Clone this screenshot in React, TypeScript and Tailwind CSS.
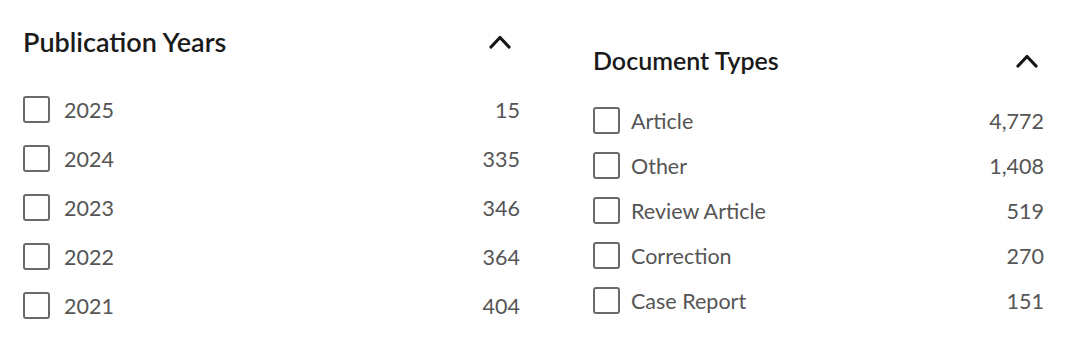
type Item = { label: string; count: string };

const years: Item[] = [
  { label: "2025", count: "15" },
  { label: "2024", count: "335" },
  { label: "2023", count: "346" },
  { label: "2022", count: "364" },
  { label: "2021", count: "404" },
];

const types: Item[] = [
  { label: "Article", count: "4,772" },
  { label: "Other", count: "1,408" },
  { label: "Review Article", count: "519" },
  { label: "Correction", count: "270" },
  { label: "Case Report", count: "151" },
];

function Chevron() {
  return (
    <svg width="22" height="16" viewBox="0 0 22 16" fill="none">
      <polyline
        points="2,13 11,3.5 20,13"
        stroke="#151515"
        strokeWidth="3.2"
        strokeLinecap="round"
        strokeLinejoin="round"
      />
    </svg>
  );
}

function Checkbox() {
  return <span className="block w-[27px] h-[27px] shrink-0 rounded-[3px] border-[2.7px] border-[#6a6a6a] bg-white" />;
}

export default function App() {
  const font = { fontFamily: 'Lato, "Open Sans", sans-serif' };
  return (
    <div className="w-[1080px] h-[350px] bg-white flex" style={font}>
      {/* Left panel */}
      <div className="w-[497px] ml-[23px] pt-[27px]">
        <div className="flex items-center justify-between h-[30px] pr-[9px]">
          <h2 className="text-[27px] font-semibold text-[#1a1a1a]">Publication Years</h2>
          <Chevron />
        </div>
        <ul className="mt-[28px]">
          {years.map((y) => (
            <li key={y.label} className="flex items-center h-[49px]">
              <Checkbox />
              <span className="ml-[14px] pt-[2px] text-[21.5px] text-[#555]">{y.label}</span>
              <span className="ml-auto pt-[2px] text-[21.5px] text-[#555]">{y.count}</span>
            </li>
          ))}
        </ul>
      </div>
      {/* Right panel */}
      <div className="w-[451px] ml-[73px] pt-[46px]">
        <div className="flex items-center justify-between h-[30px] pr-[6px]">
          <h2 className="text-[25px] font-semibold text-[#1a1a1a]">Document Types</h2>
          <Chevron />
        </div>
        <ul className="mt-[22px]">
          {types.map((t) => (
            <li key={t.label} className="flex items-center h-[45px]">
              <Checkbox />
              <span className="ml-[11px] pt-[2px] text-[21.5px] text-[#555]">{t.label}</span>
              <span className="ml-auto pt-[2px] text-[21.5px] text-[#555]">{t.count}</span>
            </li>
          ))}
        </ul>
      </div>
    </div>
  );
}
